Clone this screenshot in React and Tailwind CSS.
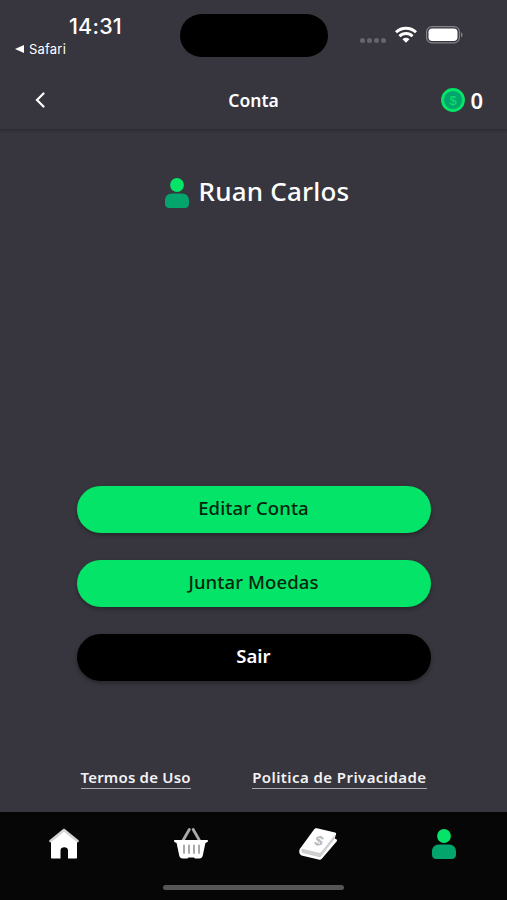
import React from "react";

// Person icon, shared by the title and the tab bar
const UserIcon = ({ className }) => (
  <svg viewBox="0 0 24 30" className={className}>
    <circle cx="12" cy="7" r="6.9" fill="#04e468" />
    <path
      d="M7 15.500h10c4.400 0 7 3 7 7.300v3.200c0 2.300-1.700 4-4 4H4c-2.300 0-4-1.700-4-4v-3.200c0-4.300 2.600-7.300 7-7.300z"
      fill="#04a56c"
    />
  </svg>
);

const HomeIcon = () => (
  <svg viewBox="0 0 30 31" className="w-[30px] h-[31px]">
    <path
      d="M2 12 15 2l13 10v17.500c0 .6-.4 1-1 1h-8V22.500c0-2.200-1.500-3.300-3.700-3.300s-3.800 1.100-3.800 3.300v8H3c-.6 0-1-.4-1-1z"
      fill="#fff"
    />
    <path
      d="M1.500 13 15 2l13.500 11"
      fill="none"
      stroke="#d4d4d4"
      strokeWidth="2.600"
      strokeLinecap="round"
      strokeLinejoin="round"
    />
  </svg>
);

const BasketIcon = () => (
  <svg viewBox="0 0 34 31" className="w-[34px] h-[31px]">
    <path
      d="m9 12.500 6.300-11M25.500 12.500l-6.300-11"
      fill="none"
      stroke="#aaa"
      strokeWidth="2.800"
      strokeLinecap="round"
    />
    <path
      d="M1 12h32c.7 0 1 .5 1 1s-.3 1-1 1.300l-1.600.7-2.600 12.500c-.5 2-1.600 3-3.400 3H21l-1-1h-5.500l-1 1H8.600c-1.800 0-2.900-1-3.400-3L2.600 15 1 14.300C.3 14 0 13.500 0 13s.3-1 1-1z"
      fill="#fff"
    />
    <path
      d="M10 17.500v7.500M15 17.500v7.500M20 17.500v7.500M25 17.500v7.500"
      stroke="#aaa"
      strokeWidth="2"
      strokeLinecap="round"
    />
  </svg>
);

const BookIcon = () => (
  <svg viewBox="0 0 38 32" className="w-[38px] h-[32px]">
    <path
      d="M18 .3 36 4.500c1 .3 1.400 1 1 1.800l-1.300 4.200 1.700.8c.7.500.8 1.300.2 2.100L23 30.500c-.9 1.100-2 1.400-3.500 1L3.500 27.800C.5 27-.5 23.800.8 21L15 1.500C16 .2 16.800 0 18 .3z"
      fill="#fff"
    />
    <path
      d="m3.500 20.800 16.500 4c1.200.2 2-.2 2.600-1L36 6.500l-.8 4.700L22.500 28c-.6.900-1.500 1.200-2.600.9L4 25.200c-2-.6-2.300-3.700-.5-4.400z"
      fill="#cfcfcf"
    />
    <text
      x="0"
      y="5.200"
      textAnchor="middle"
      transform="matrix(1 .2 -.35 .9 20 12.500)"
      className="font-['Liberation_Sans',sans-serif] text-[14.500px] font-bold"
      fill="#b8b8b8"
    >
      $
    </text>
  </svg>
);

const CoinIcon = () => (
  <svg viewBox="0 0 24 24" className="w-6 h-6">
    <circle cx="12" cy="12" r="10.500" fill="#04a56c" stroke="#04e468" strokeWidth="2.800" />
    <text
      x="12"
      y="16.500"
      textAnchor="middle"
      className="font-['Liberation_Sans',sans-serif] text-[13px]"
      fill="#04e468"
    >
      $
    </text>
  </svg>
);

const WifiIcon = () => (
  <svg viewBox="0 0 22 17" className="w-[22px] h-[17px]" fill="none" stroke="#fff" strokeWidth="3">
    <path d="M1 6.300a14.200 14.200 0 0 1 20 0" />
    <path d="M4.500 10.300a9.200 9.200 0 0 1 13 0" />
    <path d="m11 16.700-3.500-3.500a5 5 0 0 1 7 0z" fill="#fff" stroke="none" />
  </svg>
);

const BatteryIcon = () => (
  <svg viewBox="0 0 37 18" className="w-[37px] h-[18px]">
    <rect x=".6" y=".6" width="32.800" height="16.300" rx="5.400" fill="none" stroke="#85848a" strokeWidth="1.200" />
    <rect x="2.500" y="2.500" width="29" height="12.500" rx="3.700" fill="#fff" />
    <path d="M35 6.200v5.200c2-.8 2-4.400 0-5.200z" fill="#85848a" />
  </svg>
);

const StatusBar = () => (
  <div className="h-[72px] flex items-start justify-between pl-[15px] pr-[44px]">
    <div className="w-[165px] pt-[13px] font-['Inter',sans-serif]">
      <div className="pl-[54px] text-[21.500px] leading-[27px] font-medium tracking-[0.200px]">14:31</div>
      <div className="flex items-center gap-[5px] text-[13px] leading-[18px] tracking-[0.200px]">
        <svg viewBox="0 0 9 8" className="w-[9px] h-2" fill="#fff">
          <path d="M0 4 9 0v8z" />
        </svg>
        Safari
      </div>
    </div>
    <div className="mt-[14px] w-[148px] h-[43px] rounded-full bg-black" />
    <div className="flex-1 flex items-start justify-end pt-[26px]">
      <div className="flex gap-[2px] mt-[12px] mr-[9px]">
        {[0, 1, 2, 3].map((dot) => (
          <span key={dot} className="w-[5px] h-[5px] rounded-full bg-[#66656b]" />
        ))}
      </div>
      <WifiIcon />
      <div className="ml-[9px]">
        <BatteryIcon />
      </div>
    </div>
  </div>
);

const Header = () => (
  <header className="h-[58px] pb-px shrink-0 grid grid-cols-3 items-center px-6 border-b border-[#2e2d33] shadow-[0_1px_2px_rgba(0,0,0,0.2)]">
    <button className="w-3 ml-[10px]">
      <svg viewBox="0 0 12 16" className="w-3 h-4" fill="none" stroke="#fff" strokeWidth="2.200">
        <path d="M9.500 1.500 3 8l6.500 6.500" strokeLinecap="round" />
      </svg>
    </button>
    <h1 className="text-center text-[17.500px] font-semibold">Conta</h1>
    <div className="flex items-center justify-end gap-[5px]">
      <CoinIcon />
      <span className="text-[22px] leading-6 font-semibold">0</span>
    </div>
  </header>
);

const ActionButton = ({ children, className }) => (
  <button
    className={`w-full h-[47px] pb-[4px] rounded-full text-[18.500px] shadow-[0_2px_4px_rgba(0,0,0,0.3)] ${className}`}
  >
    {children}
  </button>
);

const TabBar = () => (
  <nav className="h-[88px] bg-[#060606] flex flex-col items-center">
    <div className="w-full flex justify-between items-start pt-4 pl-[49px] pr-[51px] h-[73px]">
      <HomeIcon />
      <BasketIcon />
      <div className="-ml-1">
        <BookIcon />
      </div>
      <UserIcon className="w-[24px] h-[30px] mt-px" />
    </div>
    <div className="w-[181px] h-[5px] rounded-full bg-[#555]" />
  </nav>
);

const App = () => {
  return (
    <div className="w-full h-screen flex flex-col overflow-hidden bg-[#37353d] text-white font-['Noto_Sans',sans-serif]">
      <StatusBar />
      <Header />

      <main className="flex-1 flex flex-col items-center">
        <div className="mt-[43px] pl-[7px] flex items-center gap-[10px] whitespace-nowrap">
          <UserIcon className="w-[24px] h-[30px] mt-[4px] shrink-0" />
          <h2 className="text-[26px] leading-[36px] font-medium tracking-[0.200px]">Ruan Carlos</h2>
        </div>

        <div className="mt-[277px] w-[354px] flex flex-col gap-[27px]">
          <ActionButton className="bg-[#04e468] text-[#06250f] font-medium tracking-[0.100px]">Editar Conta</ActionButton>
          <ActionButton className="bg-[#04e468] text-[#06250f] font-medium tracking-[0.100px]">Juntar Moedas</ActionButton>
          <ActionButton className="bg-black text-white font-semibold">Sair</ActionButton>
        </div>

        <div className="mt-[86px] w-[346px] flex justify-between text-[15px] leading-5 font-semibold text-[#f2f2f4]">
          <a className="pb-[1px] border-b border-[#aaa9ae] tracking-[0.200px]">Termos de Uso</a>
          <a className="pb-[1px] border-b border-[#aaa9ae] tracking-[0.420px]">Politica de Privacidade</a>
        </div>
      </main>

      <TabBar />
    </div>
  );
};

export default App;
